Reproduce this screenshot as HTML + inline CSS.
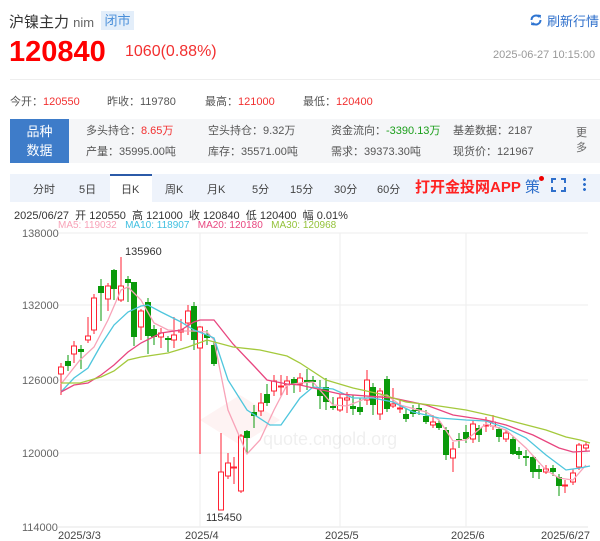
<!DOCTYPE html>
<html><head><meta charset="utf-8"><style>
*{margin:0;padding:0;box-sizing:border-box}
body{width:600px;height:541px;background:#fff;font-family:"Liberation Sans","Noto Sans CJK SC",sans-serif;position:relative;overflow:hidden;color:#333}
.a{position:absolute;white-space:nowrap}
.r{color:#f23030}
</style></head><body>
<div class="a" style="left:9px;top:11px;font-size:15px;color:#333">沪镍主力 <span style="font-size:13px;color:#666">nim</span></div>
<div class="a" style="left:101px;top:11px;width:33px;height:19px;background:#e3eefa;color:#4a8fd9;font-size:13px;line-height:19px;text-align:center">闭市</div>
<svg class="a" style="left:529px;top:13px" width="14" height="14" viewBox="0 0 14 14"><path d="M2.5 7a4.5 4.5 0 0 1 7.8-3" fill="none" stroke="#2e74d1" stroke-width="2"/><path d="M11.5 7a4.5 4.5 0 0 1-7.8 3" fill="none" stroke="#2e74d1" stroke-width="2"/><path d="M8.5 1.5l3.5 0.5-0.5 3.5z M5.5 12.5l-3.5-0.5 0.5-3.5z" fill="#2e74d1"/></svg>
<div class="a" style="left:547px;top:11px;font-size:13px;color:#2e6fcb">刷新行情</div>
<div class="a" style="left:9px;top:36px;font-size:29px;font-weight:bold;color:#f00">120840</div>
<div class="a" style="left:125px;top:43px;font-size:16px;color:#f23030">1060(0.88%)</div>
<div class="a" style="left:493px;top:49px;font-size:11px;color:#999">2025-06-27 10:15:00</div>
<div class="a" style="left:10px;top:79px;width:590px;height:1px;background:#eee"></div>
<div class="a" style="left:10px;top:93px;font-size:11px;color:#555">今开：<span class="r">120550</span></div>
<div class="a" style="left:107px;top:93px;font-size:11px;color:#555">昨收：119780</div>
<div class="a" style="left:205px;top:93px;font-size:11px;color:#555">最高：<span class="r">121000</span></div>
<div class="a" style="left:303px;top:93px;font-size:11px;color:#555">最低：<span class="r">120400</span></div>
<div class="a" style="left:10px;top:119px;width:590px;height:44px;background:#f5f6f8"></div>
<div class="a" style="left:10px;top:119px;width:59px;height:44px;background:#3e7cc9;color:#fff;font-size:13px;line-height:19px;padding-top:3px;text-align:center;white-space:normal">品种<br>数据</div>
<div class="a" style="left:86px;top:121px;font-size:11px;color:#555;line-height:21px">多头持仓：<span class="r">8.65万</span><br>产量：35995.00吨</div>
<div class="a" style="left:208px;top:121px;font-size:11px;color:#555;line-height:21px">空头持仓：9.32万<br>库存：35571.00吨</div>
<div class="a" style="left:331px;top:121px;font-size:11px;color:#555;line-height:21px">资金流向：<span style="color:#1a9e1a">-3390.13万</span><br>需求：39373.30吨</div>
<div class="a" style="left:453px;top:121px;font-size:11px;color:#555;line-height:21px">基差数据：2187<br>现货价：121967</div>
<div class="a" style="left:576px;top:126px;font-size:11px;color:#666;line-height:15px;white-space:normal;width:12px">更多</div>
<div class="a" style="left:10px;top:174px;width:590px;height:28px;background:#eef3fb"></div>
<div class="a" style="left:110px;top:174px;width:42px;height:28px;background:#fff;border-top:2px solid #2b5aa8"></div>
<div class="a" style="left:0;top:181px;font-size:11px;color:#444;width:600px">
<span class="a" style="left:33px">分时</span><span class="a" style="left:79px">5日</span><span class="a" style="left:121px">日K</span><span class="a" style="left:165px">周K</span><span class="a" style="left:207px">月K</span><span class="a" style="left:252px">5分</span><span class="a" style="left:290px">15分</span><span class="a" style="left:334px">30分</span><span class="a" style="left:377px">60分</span></div>
<div class="a" style="left:415px;top:176px;font-size:15px;font-weight:bold;color:#f22">打开金投网APP</div>
<div class="a" style="left:525px;top:176px;font-size:15px;color:#2e6fcb">策</div>
<div class="a" style="left:539px;top:176px;width:5px;height:5px;border-radius:50%;background:#e00"></div>
<svg class="a" style="left:551px;top:178px" width="15" height="14"><path d="M1 5V1h4M10 1h4v4M14 9v4h-4M5 13H1V9" fill="none" stroke="#2e6fcb" stroke-width="2"/></svg>
<div class="a" style="left:583px;top:177px;width:3px;height:14px;background:radial-gradient(circle,#2e6fcb 1.3px,transparent 1.6px) 0 0/3px 5px"></div>
<div class="a" style="left:14px;top:207px;font-size:11px;color:#333">2025/06/27 &nbsp;开 120550 &nbsp;高 121000 &nbsp;收 120840 &nbsp;低 120400 &nbsp;幅 0.01%</div>
<div class="a" style="left:58px;top:220px;font-size:10px"><span style="color:#f8a3b8">MA5: 119032</span>&nbsp;&nbsp; <span style="color:#3fbfe0">MA10: 118907</span>&nbsp;&nbsp; <span style="color:#e8467f">MA20: 120180</span>&nbsp;&nbsp; <span style="color:#94c23a">MA30: 120968</span></div>
<svg id="c" class="a" style="left:0;top:0" width="600" height="541" font-family="Liberation Sans, sans-serif"></svg>
<script>
var s='';
[233,305,380,453].forEach(function(y){s+='<line x1="58" x2="588" y1="'+y+'" y2="'+y+'" stroke="#eee"/>'});
s+='<line x1="58" x2="588" y1="527" y2="527" stroke="#e6e6e6"/>';
[200,340,466].forEach(function(x){s+='<line x1="'+x+'" x2="'+x+'" y1="233" y2="527" stroke="#eee"/>'});
[['138000',237],['132000',309],['126000',384],['120000',457],['114000',531]].forEach(function(l){s+='<text x="22" y="'+l[1]+'" font-size="11" fill="#666">'+l[0]+'</text>'});
[['2025/3/3',58],['2025/4',185],['2025/5',325],['2025/6',451],['2025/6/27',541]].forEach(function(l){s+='<text x="'+l[1]+'" y="539" font-size="11" fill="#444">'+l[0]+'</text>'});
s+='<text x="263" y="445" font-size="18" fill="#000" opacity="0.06">quote.cngold.org</text><path d="M200 420l40-25 40 25-40 25z" fill="#e33" opacity="0.06"/>';
var d=[
[61,'R',367,374,363,395],[68,'G',361,366,355,371],[74,'R',346,354,341,363],[81,'G',349,352,345,369],[88,'R',336,340,317,343],[94,'R',298,330,294,334],[101,'G',286,293,279,321],[108,'R',286,299,283,311],[114,'G',270,289,269,300],[121,'R',286,300,257,302],[128,'G',279,283,276,302],[134,'G',282,337,282,346],[141,'R',311,327,309,340],[148,'G',302,336,298,354],[154,'G',329,337,325,345],[161,'R',333,337,328,348],[168,'G',338,340,336,352],[174,'R',335,340,317,348],[181,'R',330,332,319,341],[188,'R',311,323,305,335],[194,'G',306,340,302,350],[200,'R',327,348,326,454],[207,'G',334,338,330,345],[214,'G',345,364,338,366],[221,'R',472,510,433,510],[228,'R',463,476,453,479],[234,'R',467,468,457,484],[241,'R',436,491,434,493],[247,'G',431,438,430,453],[254,'G',412,416,405,428],[261,'R',403,411,393,416],[267,'G',394,403,384,406],[274,'R',381,391,375,396],[281,'R',386,387,375,396],[287,'R',381,385,376,395],[294,'G',379,384,377,393],[300,'R',378,384,373,392],
[307,'G',380,383,369,390],[313,'G',380,382,376,388],[320,'G',389,396,380,409],[326,'G',387,402,378,410],[333,'G',406,408,397,410],[340,'R',398,410,394,412],[347,'R',398,400,392,413],[353,'G',406,409,395,415],[360,'G',407,412,398,415],[367,'R',380,400,370,405],[373,'G',387,405,383,415],[380,'R',391,414,388,420],[387,'G',379,409,376,412],[393,'R',404,406,388,408],[400,'R',408,409,400,413],[406,'G',414,419,408,422],[413,'G',410,414,405,417],[419,'G',408,411,403,415],[426,'G',416,422,410,424],[433,'R',422,425,415,428],[439,'G',423,428,420,430],[446,'G',430,455,427,460],[453,'R',449,458,442,472],[459,'G',439,440,433,448],[466,'G',432,439,425,443],[473,'R',424,439,420,443],[479,'G',428,435,425,442],[486,'R',425,426,417,432],[493,'R',422,426,415,430],[499,'G',429,437,427,442],[506,'R',433,439,430,442],[513,'G',439,454,436,455],[519,'G',451,455,447,459],[526,'G',456,458,450,466],[533,'G',457,472,455,478],[539,'G',469,472,465,479],[546,'R',469,472,465,474],[553,'G',468,472,465,476],[559,'G',477,486,474,496],[565,'R',485,486,480,493],[573,'R',473,482,469,485],[579,'R',445,467,443,470],[586,'R',445,448,442,451]];
d.forEach(function(c){var col=c[1]=='R'?'#f23':'#0a9a0a';var h=Math.max(1,c[3]-c[2]);
s+='<line x1="'+c[0]+'" x2="'+c[0]+'" y1="'+c[4]+'" y2="'+c[5]+'" stroke="'+col+'" stroke-width="1"/>';
if(c[1]=='R')s+='<rect x="'+(c[0]-2.5)+'" y="'+c[2]+'" width="5" height="'+h+'" fill="#fff" stroke="'+col+'"/>';
else s+='<rect x="'+(c[0]-3)+'" y="'+c[2]+'" width="6" height="'+h+'" fill="'+col+'"/>';});
function pl(p,c){s+='<polyline fill="none" stroke="'+c+'" stroke-width="1.3" points="'+p+'"/>'}
pl('61,384 80,360 94,347 108,320 121,290 128,287 141,300 154,323 168,330 181,331 194,331 207,332 214,340 228,410 247,454 260,440 274,410 287,385 300,383 313,382 333,405 347,406 367,398 387,395 400,405 426,412 439,420 453,441 466,440 486,424 506,430 526,448 546,470 559,478 573,480 586,465','#f8a3b8');
pl('61,392 74,378 88,368 101,345 114,325 128,312 141,306 148,305 161,312 181,322 194,330 207,335 214,338 228,380 247,410 270,425 281,425 300,398 313,387 333,389 353,398 373,398 393,402 413,412 439,418 466,420 486,421 506,428 526,438 546,455 566,470 580,468 590,466','#4fc6dd');
pl('61,392 74,385 88,383 101,375 114,365 128,352 141,343 161,333 181,330 194,322 200,320 214,320 233,344 254,366 267,380 287,384 300,385 340,394 393,398 426,405 453,415 486,420 506,425 533,435 559,448 573,452 590,451','#e8467f');
pl('61,383 80,383 101,377 114,371 128,360 141,357 168,353 188,347 207,340 233,347 260,350 287,356 300,363 326,380 353,388 380,394 406,402 439,406 466,410 493,416 519,423 546,430 566,437 580,440 590,443','#a4c93c');
s+='<text x="125" y="255" font-size="11" fill="#333">135960</text><text x="206" y="521" font-size="11" fill="#333">115450</text>';
document.getElementById('c').innerHTML=s;
</script>
</body></html>
